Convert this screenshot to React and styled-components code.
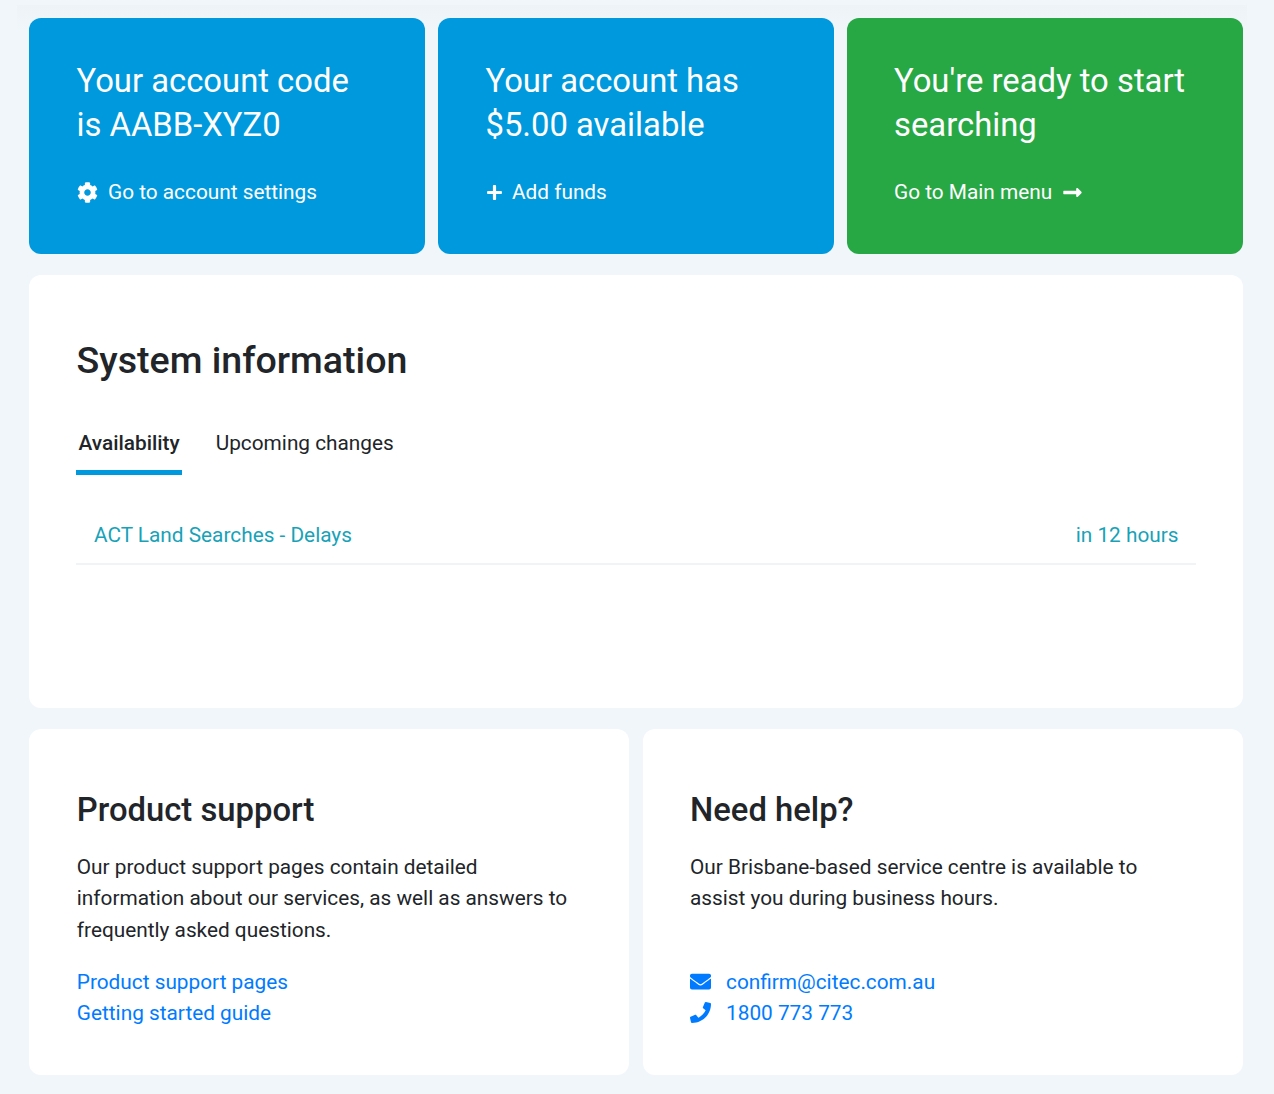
import styled, { createGlobalStyle } from "styled-components";
import { FaCog, FaPlus, FaLongArrowAltRight, FaEnvelope, FaPhone } from "react-icons/fa";

const GlobalStyle = createGlobalStyle`
  html, body {
    margin: 0;
    padding: 0;
    background: #f1f6fb;
  }
  body {
    font-family: Roboto, "Liberation Sans", sans-serif;
    color: #212529;
  }
  * {
    box-sizing: border-box;
  }
`;

const Page = styled.div`
  position: relative;
  width: 1274px;
  height: 1094px;
  padding: 18px 31px 19px 29px;
  display: flex;
  flex-direction: column;
  gap: 21px;
  overflow: hidden;

  &::before {
    content: "";
    position: absolute;
    top: 5px;
    left: 17px;
    width: 1230px;
    height: 26px;
    background: linear-gradient(#eef3f8, rgba(241, 246, 251, 0));
  }
`;

const TopRow = styled.div`
  position: relative;
  display: grid;
  grid-template-columns: repeat(3, 396px);
  column-gap: 13px;
`;

const Tile = styled.section`
  height: 236px;
  padding: 41px ${(p) => (p.$green ? 47 : 47.5)}px 0;
  border-radius: 12px;
  color: #fff;
  background: ${(p) => (p.$green ? "#28a745" : "#0099dd")};
`;

const TileTitle = styled.div`
  font-size: 32.8px;
  line-height: 44px;
  margin-bottom: 33px;
  white-space: pre-line;
`;

const TileLink = styled.a`
  display: flex;
  align-items: center;
  gap: ${(p) => p.$gap}px;
  font-size: 20.8px;
  line-height: 24px;
  color: #fff;
`;

const Card = styled.section`
  position: relative;
  background: #fff;
  border-radius: 12px;
  padding: ${(p) => p.$padding};
  height: ${(p) => p.$height}px;
`;

const BigHeading = styled.h2`
  margin: 0 0 44px;
  font-size: 37.6px;
  line-height: 44px;
  font-weight: 500;
  color: #212529;
`;

const Tabs = styled.div`
  display: flex;
  gap: 31px;
  margin: 0 0 30px -0.5px;
`;

const Tab = styled.div`
  height: 49px;
  padding: 5px 2.5px 0;
  font-size: 20.8px;
  line-height: 24px;
  font-weight: ${(p) => (p.$active ? 500 : 400)};
  border-bottom: ${(p) => (p.$active ? "5px solid #0099dd" : "none")};
`;

const NoticeRow = styled.div`
  display: flex;
  justify-content: space-between;
  margin-left: -0.5px;
  padding: 18px 17px 16px 18px;
  font-size: 20.8px;
  line-height: 24px;
  color: #17a2b8;
  border-bottom: 2px solid #f1f4f7;
`;

const BottomRow = styled.div`
  display: grid;
  grid-template-columns: repeat(2, 600px);
  column-gap: 14px;
`;

const Heading = styled.h3`
  margin: 0 0 22.2px;
  font-size: 32.8px;
  line-height: 40px;
  font-weight: 500;
  color: #212529;
`;

const Copy = styled.p`
  margin: 0;
  height: 113.8px;
  font-size: 20.8px;
  line-height: 31.2px;
`;

const LinkList = styled.div`
  display: flex;
  flex-direction: column;
`;

const PlainLink = styled.a`
  display: flex;
  align-items: center;
  gap: 15px;
  height: 31.2px;
  font-size: 20.8px;
  color: #007bff;

  svg {
    width: 21px;
    height: 21px;
  }
`;

export default function App() {
  return (
    <>
      <GlobalStyle />
      <Page>
        <TopRow>
          <Tile>
            <TileTitle>{"Your account code\nis AABB-XYZ0"}</TileTitle>
            <TileLink $gap={10.5}>
              <FaCog size={21} />
              Go to account settings
            </TileLink>
          </Tile>
          <Tile>
            <TileTitle>{"Your account has\n$5.00 available"}</TileTitle>
            <TileLink $gap={9.5}>
              <FaPlus size={17} />
              Add funds
            </TileLink>
          </Tile>
          <Tile $green>
            <TileTitle>{"You're ready to start\nsearching"}</TileTitle>
            <TileLink $gap={9.5}>
              Go to Main menu
              <FaLongArrowAltRight size={21} />
            </TileLink>
          </Tile>
        </TopRow>

        <Card $padding="63px 47.5px 0" $height={433}>
          <BigHeading>System information</BigHeading>
          <Tabs>
            <Tab $active>Availability</Tab>
            <Tab>Upcoming changes</Tab>
          </Tabs>
          <NoticeRow>
            <span>ACT Land Searches - Delays</span>
            <span>in 12 hours</span>
          </NoticeRow>
        </Card>

        <BottomRow>
          <Card $padding="61px 47.8px 0" $height={346}>
            <Heading>Product support</Heading>
            <Copy>
              Our product support pages contain detailed information about our services, as well as
              answers to frequently asked questions.
            </Copy>
            <LinkList>
              <PlainLink>Product support pages</PlainLink>
              <PlainLink>Getting started guide</PlainLink>
            </LinkList>
          </Card>
          <Card $padding="61px 47px 0" $height={346}>
            <Heading>Need help?</Heading>
            <Copy>
              Our Brisbane-based service centre is available to assist you during business hours.
            </Copy>
            <LinkList>
              <PlainLink>
                <FaEnvelope />
                confirm@citec.com.au
              </PlainLink>
              <PlainLink>
                <FaPhone />
                1800 773 773
              </PlainLink>
            </LinkList>
          </Card>
        </BottomRow>
      </Page>
    </>
  );
}
